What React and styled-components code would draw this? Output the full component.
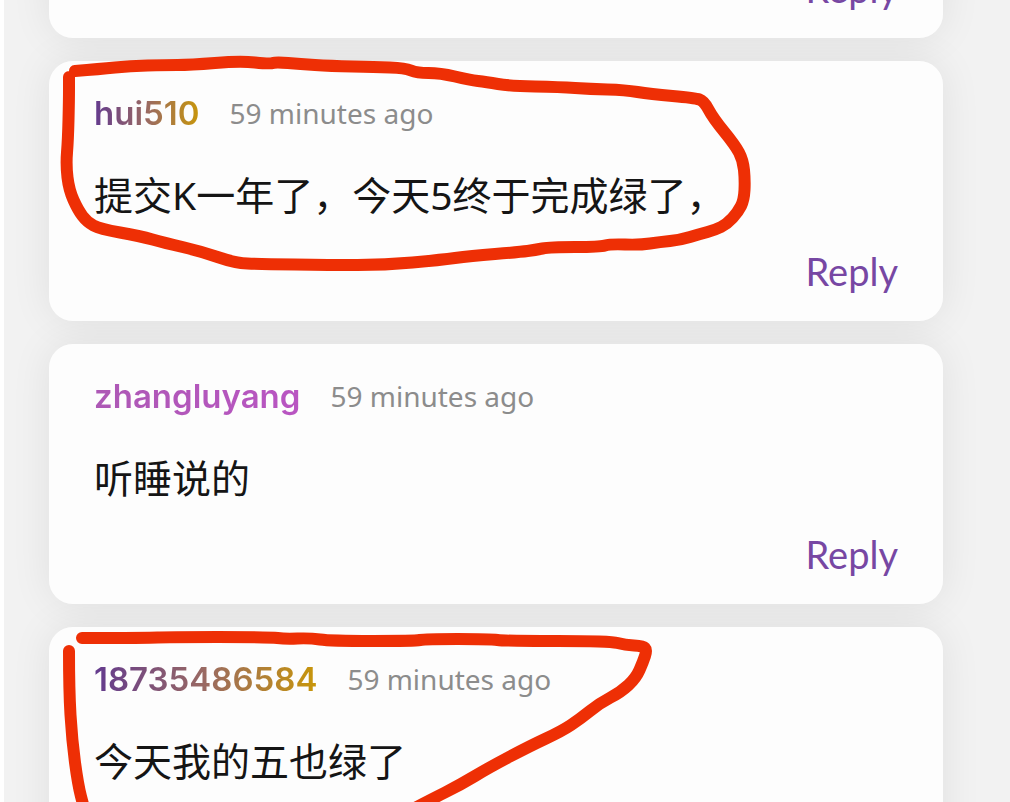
import React from 'react';
import styled, { createGlobalStyle } from 'styled-components';

const GlobalStyle = createGlobalStyle`
    * {
        box-sizing: border-box;
    }

    body {
        margin: 0;
        background-color: #f2f2f2;
        font-family: 'Noto Sans', 'Noto Sans CJK SC', sans-serif;
    }
`;

const Page = styled.main`
    height: 100vh;
    overflow: hidden;
    border-left: 4px solid white;
    padding: 0 67px 0 45px;
`;

const Feed = styled.section`
    display: flex;
    flex-direction: column;
    gap: 23px;
    isolation: isolate;
`;

const CardContainer = styled.article`
    position: relative;
    flex-shrink: 0;
    display: flex;
    flex-direction: column;
    background-color: #fdfdfd;
    border-radius: 24px;
    padding: 30px 45px;
    margin-top: ${({ $scrolled }) => ($scrolled ? '-62px' : '0')};

    /* the shadow sits under every card, so neighbours stay clean */
    &::before {
        content: '';
        position: absolute;
        inset: 0;
        z-index: -1;
        border-radius: 24px;
        box-shadow: 0 0 40px rgba(0, 0, 0, 0.08);
    }
`;

const CardHeader = styled.header`
    display: flex;
    align-items: center;
    gap: 30px;
    height: 44px;
`;

const UserName = styled.h4`
    margin: 0;
    font-family: Inter, sans-serif;
    font-size: 33px;
    font-weight: 600;
    line-height: 44px;
    color: transparent;
    background-image: ${({ $colors }) => `linear-gradient(90deg, ${$colors})`};
    background-clip: text;
`;

const Time = styled.time`
    color: #8c8c8c;
    font-family: 'Noto Sans', sans-serif;
    font-size: 28px;
    line-height: 44px;
`;

const Message = styled.p`
    margin: 32px 0 28px;
    color: #151515;
    font-size: 39px;
    line-height: 56px;
`;

const ReplyButton = styled.button`
    align-self: flex-end;
    padding: 0;
    border: none;
    background: none;
    color: #7747a3;
    font-family: Lato, sans-serif;
    font-size: 38px;
    line-height: 40px;
    cursor: pointer;
`;

const Scribble = styled.svg`
    position: absolute;
    top: 0;
    left: 0;
    width: 700px;
    height: 210px;
    overflow: visible;
    pointer-events: none;
    fill: none;
    stroke: #ee2f05;
    stroke-width: 12px;
    stroke-linecap: round;
    stroke-linejoin: round;
`;

const warm = '#633a8e, #9a6a62 50%, #c8960a';
const pink = '#ad59b5, #b955c2';

const comments = [
  {
    name: 'hui510',
    colors: warm,
    time: '59 minutes ago',
    text: '提交K一年了，今天5终于完成绿了，',
    viewBox: '49 61 700 210',
    strokes: [
      '75,71 100,69 130,66 165,65 190,65 240,61 270,64 276,62 300,64 330,66 375,67 405,68 417,73 440,73 470,80 486,82 510,86 560,87 590,89 625,90 650,94 695,98 704,101 713,118 735,145 743,160 745,180 744,200 738,212 727,224 715,230 700,234 680,240 660,242 640,245 610,244 600,247 550,247 535,250 520,252 470,256 440,260 385,265 330,265 260,264 235,263 200,251 165,243 140,236 100,229 87,222 78,210 69,190 66,165 68,140 69,100 69,77',
    ],
  },
  {
    name: 'zhangluyang',
    colors: pink,
    time: '59 minutes ago',
    text: '听睡说的',
  },
  {
    name: '18735486584',
    colors: warm,
    time: '59 minutes ago',
    text: '今天我的五也绿了',
    viewBox: '49 627 700 210',
    strokes: [
      '82,638 150,638 165,637 270,637 285,639 310,638 330,641 415,641 425,639 490,639 505,641 610,641 625,645 643,646 647,650 643,662 636,678 621,692 600,703 580,719 562,731 530,746 490,767 460,785 430,800 415,808',
      '69,651 69,690 72,740 78,785 84,808',
    ],
  },
];

// rounds the corners between points by curving through their midpoints
const toPath = (stroke) => {
  const points = stroke.split(' ').map((point) => point.split(',').map(Number));
  const [start, ...rest] = points;
  const last = rest.pop();
  const curves = rest.map(([x, y], i) => {
    const [nextX, nextY] = rest[i + 1] || last;
    return `Q${x} ${y} ${(x + nextX) / 2} ${(y + nextY) / 2}`;
  });
  return `M${start.join(' ')}${curves.join('')}L${last.join(' ')}`;
};

const Comment = ({ comment }) => {
  return (
    <CardContainer>
      <CardHeader>
          <UserName $colors={comment.colors}>{comment.name}</UserName>
          <Time>{comment.time}</Time>
      </CardHeader>
      <Message lang="zh-CN">{comment.text}</Message>
      <ReplyButton type="button">Reply</ReplyButton>
      {comment.strokes && (
          <Scribble viewBox={comment.viewBox} aria-hidden="true">
              {comment.strokes.map((stroke) => <path key={stroke} d={toPath(stroke)} />)}
          </Scribble>
      )}
    </CardContainer>
  );
};

const App = () => {
  return (
    <Page>
      <GlobalStyle />
      <Feed>
          <CardContainer $scrolled>
              <ReplyButton type="button">Reply</ReplyButton>
          </CardContainer>
          {comments.map((comment) => <Comment key={comment.name} comment={comment} />)}
      </Feed>
    </Page>
  );
};

export default App;
